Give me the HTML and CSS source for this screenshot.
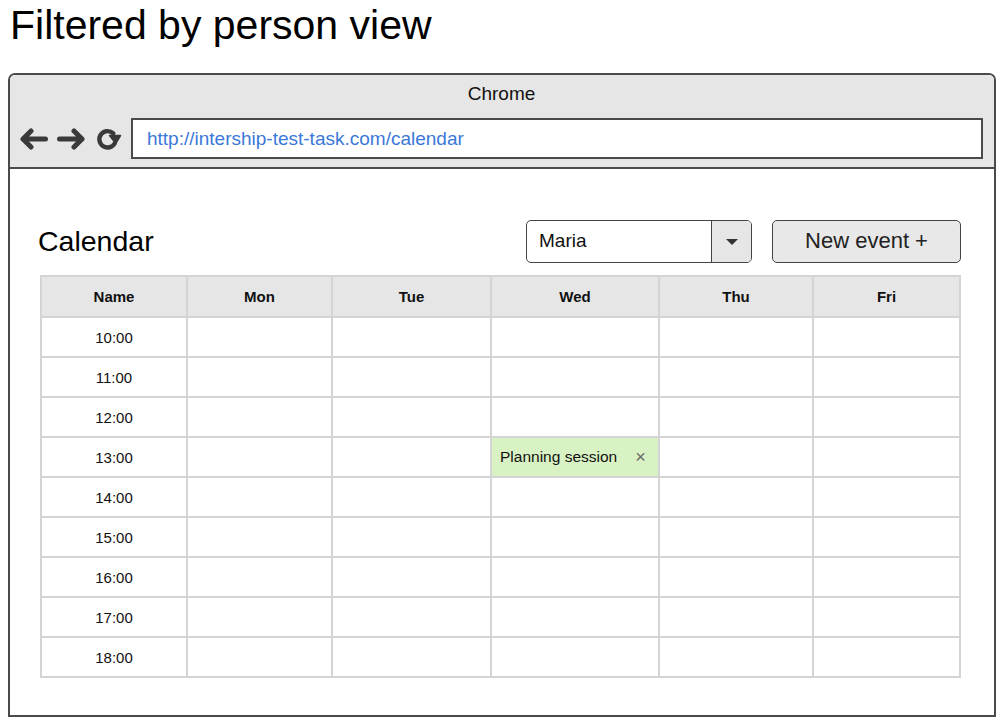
FILE: index.html
```html
<!DOCTYPE html>
<html lang="en">
<head>
<meta charset="utf-8">
<title>Filtered by person view</title>
<link rel="stylesheet" href="styles.css">
</head>
<body>
<h1 class="page-title">Filtered by person view</h1>
<div class="browser">
  <div class="browser-header">
    <div class="browser-name">Chrome</div>
    <div class="browser-bar">
      <div class="nav-icons">
        <svg class="nav-icon" width="28" height="22" viewBox="0 0 28 22"><path d="M25.5 11H3M11 3L3 11L11 19" fill="none" stroke="#3a3a3a" stroke-width="5" stroke-linecap="round" stroke-linejoin="round"/></svg>
        <svg class="nav-icon" width="28" height="22" viewBox="0 0 28 22"><path d="M2.5 11H25M17 3L25 11L17 19" fill="none" stroke="#3a3a3a" stroke-width="5" stroke-linecap="round" stroke-linejoin="round"/></svg>
        <svg class="nav-icon" width="26" height="24" viewBox="0 0 26 24"><path d="M18.8 16.2A8.2 8.2 0 1 1 17.3 6.4" fill="none" stroke="#3a3a3a" stroke-width="4.4" stroke-linecap="round"/><path d="M13.5 8.5L24.5 8.5L19.8 16.5Z" fill="#3a3a3a" stroke="#3a3a3a" stroke-width="1.5" stroke-linejoin="round"/></svg>
      </div>
      <div class="url-box">http://intership-test-task.com/calendar</div>
    </div>
  </div>
  <div class="browser-content">
    <div class="toolbar">
      <div class="cal-title">Calendar</div>
      <div class="controls">
        <div class="select">
          <span class="select-value">Maria</span>
          <span class="select-arrow"><span class="triangle"></span></span>
        </div>
        <div class="btn">New event +</div>
      </div>
    </div>
    <table class="calendar">
      <colgroup>
        <col class="c1"><col class="c2"><col class="c3"><col class="c4"><col class="c5"><col class="c6">
      </colgroup>
      <thead>
        <tr><th>Name</th><th>Mon</th><th>Tue</th><th>Wed</th><th>Thu</th><th>Fri</th></tr>
      </thead>
      <tbody>
        <tr><td>10:00</td><td></td><td></td><td></td><td></td><td></td></tr>
        <tr><td>11:00</td><td></td><td></td><td></td><td></td><td></td></tr>
        <tr><td>12:00</td><td></td><td></td><td></td><td></td><td></td></tr>
        <tr><td>13:00</td><td></td><td></td><td class="event"><div class="event-inner"><span>Planning session</span><span class="close">×</span></div></td><td></td><td></td></tr>
        <tr><td>14:00</td><td></td><td></td><td></td><td></td><td></td></tr>
        <tr><td>15:00</td><td></td><td></td><td></td><td></td><td></td></tr>
        <tr><td>16:00</td><td></td><td></td><td></td><td></td><td></td></tr>
        <tr><td>17:00</td><td></td><td></td><td></td><td></td><td></td></tr>
        <tr><td>18:00</td><td></td><td></td><td></td><td></td><td></td></tr>
      </tbody>
    </table>
  </div>
</div>
</body>
</html>
```

FILE: styles.css
```css
html, body {
  margin: 0;
  padding: 0;
  background: #ffffff;
}
body {
  font-family: "Liberation Sans", Arial, sans-serif;
  color: #111;
}
.page-title {
  margin: 0;
  padding: 1px 0 0 10px;
  font-size: 41px;
  line-height: 48px;
  font-weight: normal;
  color: #000;
}
.browser {
  margin: 24px 0 0 8px;
  width: 988px;
  box-sizing: border-box;
  border: 2px solid #4a4a4a;
  border-radius: 7px 7px 0 0;
  background: #fff;
}
.browser-header {
  background: #e6e6e6;
  border-bottom: 2px solid #4a4a4a;
  border-radius: 5px 5px 0 0;
  padding: 8px 11px 8px 10px;
}
.browser-name {
  text-align: center;
  font-size: 19px;
  line-height: 22px;
  color: #111;
}
.browser-bar {
  display: flex;
  align-items: center;
  margin-top: 13px;
}
.nav-icons {
  display: flex;
  align-items: center;
  gap: 9px;
  width: 111px;
  box-sizing: border-box;
}
.nav-icon {
  display: block;
}
.nav-icon:last-child {
  margin-left: 2px;
}
.url-box {
  flex: 1;
  height: 41px;
  box-sizing: border-box;
  border: 2px solid #4a4a4a;
  background: #fff;
  padding-left: 14px;
  font-size: 19px;
  line-height: 37px;
  color: #3b78d8;
}
.browser-content {
  padding: 51px 33px 37px 30px;
}
.toolbar {
  display: flex;
  align-items: center;
  justify-content: space-between;
  height: 43px;
  margin-bottom: 12px;
}
.cal-title {
  font-size: 28.5px;
  margin-left: -2px;
  color: #000;
}
.controls {
  display: flex;
  gap: 20px;
}
.select {
  display: flex;
  width: 226px;
  height: 43px;
  box-sizing: border-box;
  border: 1.5px solid #444;
  border-radius: 5px;
  overflow: hidden;
  background: #fff;
}
.select-value {
  flex: 1;
  padding-left: 12px;
  font-size: 19px;
  line-height: 40px;
  color: #111;
}
.select-arrow {
  width: 39px;
  border-left: 1.5px solid #444;
  background: #e6e6e6;
  display: flex;
  align-items: center;
  justify-content: center;
}
.triangle {
  width: 0;
  height: 0;
  border-left: 6px solid transparent;
  border-right: 6px solid transparent;
  border-top: 6px solid #333;
}
.btn {
  width: 189px;
  height: 43px;
  box-sizing: border-box;
  border: 1.5px solid #444;
  border-radius: 5px;
  background: #e8e8e8;
  text-align: center;
  font-size: 22px;
  line-height: 40px;
  color: #222;
}
.calendar {
  width: 919px;
  border-collapse: collapse;
  table-layout: fixed;
}
.c1 { width: 146px; }
.c2 { width: 145px; }
.c3 { width: 159px; }
.c4 { width: 168px; }
.c5 { width: 154px; }
.c6 { width: 147px; }
.calendar th,
.calendar td {
  border: 2px solid #d4d4d4;
  padding: 0;
  text-align: center;
  font-size: 15px;
  color: #111;
}
.calendar th {
  height: 39px;
  background: #e6e6e6;
  font-weight: bold;
}
.calendar td {
  height: 38px;
}
.calendar td.event {
  background: #d9f2c3;
  text-align: left;
}
.event-inner {
  display: flex;
  align-items: center;
  padding-left: 8px;
  gap: 18px;
  font-size: 15.5px;
}
.close {
  color: #666;
  font-size: 18px;
}
```
